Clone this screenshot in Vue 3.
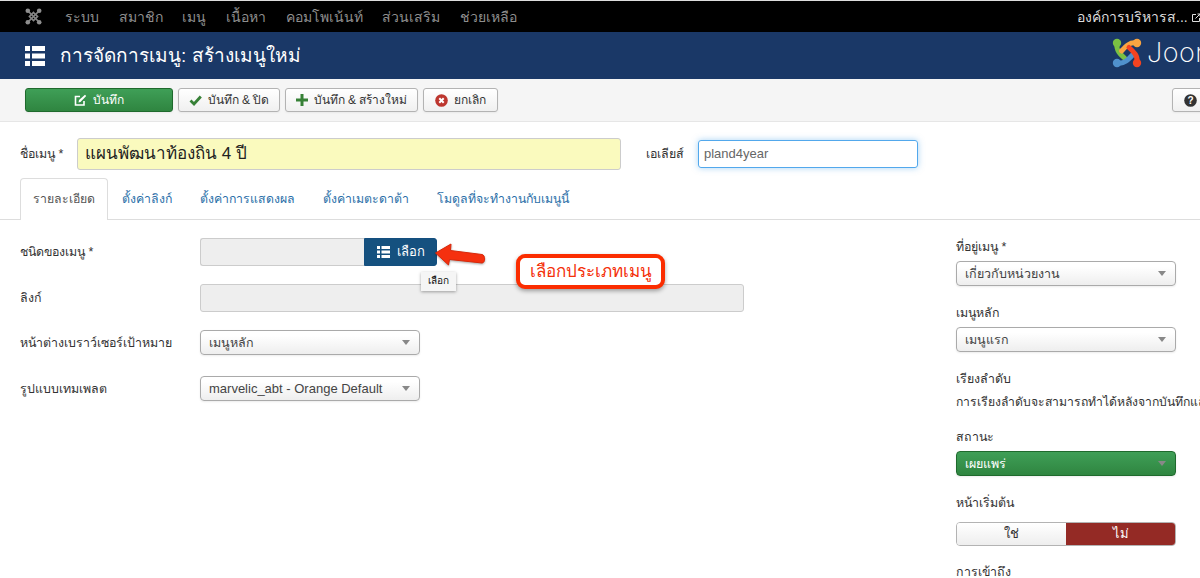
<script setup>
const navItems = ['ระบบ', 'สมาชิก', 'เมนู', 'เนื้อหา', 'คอมโพเน้นท์', 'ส่วนเสริม', 'ช่วยเหลือ']
const tabs = ['รายละเอียด', 'ตั้งค่าลิงก์', 'ตั้งค่าการแสดงผล', 'ตั้งค่าเมตะดาต้า', 'โมดูลที่จะทำงานกับเมนูนี้']
</script>

<template>
  <div class="page">
    <nav class="topnav">
      <svg class="jicon" width="17" height="17" viewBox="0 0 17 17">
        <g fill="none" stroke="#858585" stroke-width="1.700">
          <path d="M3 3 14 14M14 3 3 14" />
          <path d="M8.500 4.500 12.500 8.500 8.500 12.500 4.500 8.500Z" />
        </g>
        <g fill="#8e8e8e"><circle cx="2.800" cy="2.800" r="2.300" /><circle cx="14.200" cy="2.800" r="2.300" /><circle cx="2.800" cy="14.200" r="2.300" /><circle cx="14.200" cy="14.200" r="2.300" /></g>
      </svg>
      <ul class="navlist">
        <li v-for="n in navItems" :key="n">{{ n }}</li>
      </ul>
      <div class="navright">องค์การบริหารส...
        <svg width="9" height="9" viewBox="0 0 9 9" fill="none" stroke="#ddd" stroke-width="1"><path d="M7.500 5v3.500h-7v-7H4" /><path d="M3.500 5.500 8 1M5.500 1H8v2.500" /></svg>
      </div>
    </nav>

    <header class="titlebar">
      <svg class="listicon big" width="20" height="20" viewBox="0 0 20 20"><path d="M0 0h5v5H0zM7 0h13v5H7zM0 7.500h5v5H0zM7 7.500h13v5H7zM0 15h5v5H0zM7 15h13v5H7z" fill="#fff" /></svg>
      <h1>การจัดการเมนู: สร้างเมนูใหม่</h1>
      <div class="logo">
        <svg width="30" height="30" viewBox="0 0 30 30" fill="none" stroke-width="5" stroke-linecap="round">
          <path d="M5 6C4 12 8 16 13 20.500" stroke="#7ac143" />
          <path d="M24 5C18 4 14 8 9.500 13" stroke="#f9a541" />
          <path d="M6 25C12 26 16 22 20.500 17" stroke="#5091cd" />
          <path d="M25 24C26 18 22 14 17 9.500" stroke="#f44321" />
          <circle cx="5" cy="5" r="4.200" fill="#7ac143" />
          <circle cx="25" cy="5" r="4.200" fill="#f9a541" />
          <circle cx="5" cy="25" r="4.200" fill="#5091cd" />
          <circle cx="25" cy="25" r="4.200" fill="#f44321" />
        </svg>
        <span>Joomla!</span>
      </div>
    </header>

    <div class="toolbar">
      <button class="btn save">
        <svg width="13" height="13" viewBox="0 0 13 13" fill="none" stroke="#fff" stroke-width="1.600"><path d="M10 7v4H1.500V2.500H6" /><path d="M4.500 8.500 5 6 11 .8l1.200 1.300L6.500 8Z" fill="#fff" stroke="none" /></svg>
        <span>บันทึก</span>
      </button>
      <button class="btn w102">
        <svg width="13" height="11" viewBox="0 0 13 11" fill="none" stroke="#378137" stroke-width="2.800"><path d="M1.500 5.500 5 9 11.800 1.500" /></svg>
        <span>บันทึก &amp; ปิด</span>
      </button>
      <button class="btn w133">
        <svg width="12" height="12" viewBox="0 0 12 12"><path d="M4.500 0h3v4.500H12v3H7.500V12h-3V7.500H0v-3h4.500z" fill="#378137" /></svg>
        <span>บันทึก &amp; สร้างใหม่</span>
      </button>
      <button class="btn w75">
        <svg width="13" height="13" viewBox="0 0 13 13"><circle cx="6.500" cy="6.500" r="6.300" fill="#bd362f" /><path d="M4.300 4.300 8.700 8.700M8.700 4.300 4.300 8.700" stroke="#fff" stroke-width="2" /></svg>
        <span>ยกเลิก</span>
      </button>
      <button class="btn help">
        <svg width="13" height="13" viewBox="0 0 13 13"><circle cx="6.500" cy="6.500" r="6.300" fill="#333" /><text x="6.500" y="10" text-anchor="middle" font-size="10" font-weight="700" fill="#fff" font-family="Liberation Sans">?</text></svg>
      </button>
    </div>

    <main class="content">
      <div class="titlerow">
        <label class="tl">ชื่อเมนู *</label>
        <div class="titleinput">แผนพัฒนาท้องถิน 4 ปี</div>
        <label class="al">เอเลียส์</label>
        <div class="aliasinput">pland4year</div>
      </div>

      <ul class="tabs">
        <li v-for="(t, i) in tabs" :key="t" :class="{ active: i === 0 }">{{ t }}</li>
      </ul>

      <div class="columns">
        <section class="left">
          <div class="field">
            <label class="tall">ชนิดของเมนู *</label>
            <div class="picker">
              <div class="readonly short"></div>
              <button class="pick">
                <svg width="13" height="12" viewBox="0 0 13 12"><path d="M0 0h3v3H0zM4.500 0H13v3H4.500zM0 4.500h3v3H0zM4.500 4.500H13v3H4.500zM0 9h3v3H0zM4.500 9H13v3H4.500z" fill="#fff" /></svg>
                <span>เลือก</span>
              </button>
              <div class="tip">เลือก</div>
            </div>
          </div>
          <div class="field">
            <label class="tall">ลิงก์</label>
            <div class="readonly long"></div>
          </div>
          <div class="field">
            <label>หน้าต่างเบราว์เซอร์เป้าหมาย</label>
            <div class="select"><span>เมนูหลัก</span><i class="caret"></i></div>
          </div>
          <div class="field">
            <label>รูปแบบเทมเพลต</label>
            <div class="select latin"><span>marvelic_abt - Orange Default</span><i class="caret"></i></div>
          </div>
        </section>

        <aside class="right">
          <label>ที่อยู่เมนู *</label>
          <div class="select"><span>เกี่ยวกับหน่วยงาน</span><i class="caret"></i></div>
          <label>เมนูหลัก</label>
          <div class="select"><span>เมนูแรก</span><i class="caret"></i></div>
          <label>เรียงลำดับ</label>
          <p class="note">การเรียงลำดับจะสามารถทำได้หลังจากบันทึกแล้ว</p>
          <label>สถานะ</label>
          <div class="select green"><span>เผยแพร่</span><i class="caret"></i></div>
          <label class="xl">หน้าเริ่มต้น</label>
          <div class="toggle"><span>ใช่</span><span class="no">ไม่</span></div>
          <label>การเข้าถึง</label>
        </aside>
      </div>
    </main>

    <div class="callout">เลือกประเภทเมนู</div>
    <svg class="arrow" width="52" height="28" viewBox="0 0 52 28">
      <path d="M0.500 12 16 3 15.500 9.500 47 13.500C50.500 14 50.500 22 47 22L14.500 18.500 13.500 24Z" fill="#f5300f" stroke="#d8280a" stroke-width="1" stroke-linejoin="round" />
    </svg>
  </div>
</template>

<style>
html, body { margin: 0; height: 578px; overflow: hidden; background: #fff; }
</style>

<style scoped>
* { box-sizing: border-box; }
.page {
  position: relative;
  width: 1200px;
  height: 578px;
  overflow: hidden;
  font-family: "Liberation Sans", "Noto Sans", "Noto Sans CJK SC", sans-serif;
  font-size: 13px;
  line-height: 18px;
  color: #333;
  border-top: 1px solid #ddd;
}
.topnav { height: 31px; background: #000; display: flex; align-items: center; padding-left: 25px; color: #8f8f8f; }
.jicon { flex: none; }
.navlist { list-style: none; margin: 0 0 0 23px; padding: 0; display: flex; gap: 19.700px; font-size: 14px; }
.navright { margin-left: auto; color: #ddd; white-space: nowrap; width: 123px; flex: none; overflow: hidden; font-size: 14px; }
.titlebar { height: 47px; background: #1a3867; display: flex; align-items: center; padding-left: 25px; color: #fff; position: relative; }
.titlebar h1 { margin: 0 0 0 15px; font-size: 19px; font-weight: 400; }
.logo { position: absolute; left: 1112px; top: 6px; display: flex; align-items: center; gap: 5px; white-space: nowrap; }
.logo span { font-family: Inter, "Liberation Sans", sans-serif; font-size: 27px; font-weight: 200; letter-spacing: .5px; }
.toolbar { height: 43px; background: #f5f5f5; border-bottom: 1px solid #e6e6e6; display: flex; align-items: flex-start; padding: 9px 0 0 25px; gap: 5px; }
.btn { height: 24px; padding: 0; display: flex; align-items: center; justify-content: center; gap: 6px; border: 1px solid #b3b3b3; border-radius: 3px; background: linear-gradient(#fff, #f0f0f0); color: #333; font: inherit; font-size: 12px; white-space: nowrap; box-shadow: 0 1px 2px rgba(0,0,0,.05); }
.btn.save { width: 148px; background: linear-gradient(#3f9f57, #2f8540); border-color: #1f6a2d; color: #fff; }
.w102 { width: 102px; }
.w133 { width: 133px; }
.w75 { width: 75px; }
.btn.help { position: absolute; left: 1172px; width: 50px; justify-content: flex-start; padding-left: 11px; }
.content { padding: 16px 0 0 20px; }
.titlerow { display: flex; align-items: center; height: 32px; }
.tl { width: 57px; flex: none; font-size: 12.400px; }
.titleinput { width: 544px; height: 32px; flex: none; background: #fafabe; border: 1px solid #ccc; border-radius: 3px; font-size: 17px; line-height: 30px; padding-left: 7px; color: #222; }
.al { margin-left: 25px; width: 52px; flex: none; font-size: 12.400px; }
.aliasinput { width: 220px; height: 28px; flex: none; border: 1px solid #52a8ec; border-radius: 3px; padding-left: 5px; line-height: 26px; color: #666; box-shadow: 0 0 6px rgba(82,168,236,.5); }
.tabs { list-style: none; margin: 8px 0 0 -20px; padding: 0 0 0 20px; height: 42px; border-bottom: 1px solid #ddd; display: flex; }
.tabs li { padding: 12px 14px 0; color: #2a6fa8; font-size: 12.300px; white-space: nowrap; }
.tabs li.active { color: #555; background: #fff; border: 1px solid #ddd; border-bottom: 0; border-radius: 4px 4px 0 0; height: 42px; padding: 11px 12px 0; }
.columns { display: flex; padding-top: 18px; }
.left { width: 936px; flex: none; display: flex; flex-direction: column; gap: 18px; }
.field { display: flex; align-items: flex-start; height: 28px; }
.field > label { width: 180px; flex: none; font-size: 12.400px; line-height: 26px; }
.field > label.tall { line-height: 28px; }
.picker { display: flex; position: relative; }
.readonly { background: #eee; border: 1px solid #ccc; height: 28px; }
.readonly.short { width: 164px; border-radius: 3px 0 0 3px; border-right: 0; }
.readonly.long { width: 544px; border-radius: 3px; }
.pick { width: 73px; height: 28px; border: 1px solid #144f7f; background: #15517f; border-radius: 0 3px 3px 0; color: #fff; font: inherit; display: flex; align-items: center; justify-content: center; gap: 7px; padding: 0; }
.tip { position: absolute; left: 221px; top: 34px; width: 35px; height: 19px; background: #f5f5f5; color: #111; font-size: 10px; line-height: 18px; text-align: center; box-shadow: 0 1px 3px rgba(0,0,0,.35); }
.select { width: 220px; height: 25px; border: 1px solid #aaa; border-radius: 4px; background: linear-gradient(#fff 20%, #eee); display: flex; align-items: center; justify-content: space-between; padding: 0 8px; color: #444; font-size: 12.500px; box-shadow: 0 1px 2px rgba(0,0,0,.08); }
.select.latin { font-size: 13px; }
.caret { width: 0; height: 0; border: 4px solid transparent; border-top: 5px solid #888; border-bottom: 0; margin-right: 1px; }
.right { width: 300px; flex: none; font-size: 12.400px; }
.right label { display: block; margin-bottom: 5px; }
.right label.xl { margin-bottom: 10px; }
.right .select { margin-bottom: 18px; }
.note { margin: 0 0 17px; white-space: nowrap; font-size: 12.200px; }
.select.green { background: linear-gradient(#3f9f57, #2f8540); border-color: #1f6a2d; color: #fff; }
.toggle { width: 220px; height: 24px; display: flex; margin-bottom: 17px; border-radius: 4px; overflow: hidden; border: 1px solid #b3b3b3; font-size: 13px; }
.toggle span { flex: 1; text-align: center; line-height: 22px; background: linear-gradient(#fff, #eee); }
.toggle .no { background: #942a25; color: #fff; }
.callout { position: absolute; left: 516px; top: 253px; width: 149px; height: 35px; border: 4px solid #fb2d00; border-radius: 9px; background: #fff; color: #f4300a; font-size: 17px; line-height: 27px; text-align: center; white-space: nowrap; box-shadow: 0 2px 4px rgba(0,0,0,.35); }
.arrow { position: absolute; left: 435px; top: 240px; filter: drop-shadow(0 1px 1px rgba(0,0,0,.35)); }
</style>
